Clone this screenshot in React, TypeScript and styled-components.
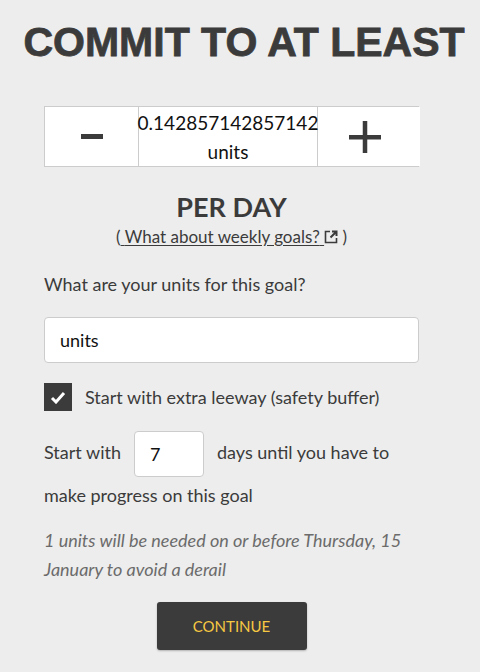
import React, { useState } from 'react';
import styled, { createGlobalStyle } from 'styled-components';

const GlobalStyle = createGlobalStyle`
  html, body {
    margin: 0;
    padding: 0;
    background: #ededed;
  }
  body {
    font-family: Lato, "Liberation Sans", sans-serif;
    color: #3b3b3b;
  }
`;

const Page = styled.div`
  width: 480px;
  min-height: 672px;
  display: flex;
  flex-direction: column;
  align-items: center;
  padding-top: 20px;
  box-sizing: border-box;
`;

const Title = styled.h1`
  margin: 0 0 0 8px;
  font-family: "Liberation Sans", Arial, sans-serif;
  font-weight: 700;
  font-size: 41px;
  line-height: 44px;
  color: #3b3b3b;
  white-space: nowrap;
  -webkit-text-stroke: 0.8px #3b3b3b;
`;

const Content = styled.div`
  width: 375px;
  align-self: flex-start;
  margin-left: 44px;
  display: flex;
  flex-direction: column;
`;

const Stepper = styled.div`
  margin-top: 42px;
  display: grid;
  grid-template-columns: 93px 180px 102px;
  height: 61px;
  border: 1px solid #cccccc;
  box-sizing: border-box;
  background: #fff;
`;

const StepButton = styled.button<{ $shift?: number }>`
  border: none;
  background: #fff;
  padding: 0 ${p => p.$shift ?? 0}px 0 0;
  display: flex;
  align-items: center;
  justify-content: center;
  cursor: pointer;
`;

const StepValue = styled.div`
  border-left: 1px solid #cccccc;
  border-right: 1px solid #cccccc;
  display: flex;
  flex-direction: column;
  align-items: center;
  justify-content: center;
  font-size: 19px;
  line-height: 29px;
  color: #111;
`;

const PerDay = styled.div`
  margin-top: 24px;
  text-align: center;
  font-size: 27px;
  font-weight: 700;
  line-height: 32px;
`;

const LinkLine = styled.div`
  margin-top: 3px;
  text-align: center;
  font-size: 17px;
  line-height: 22px;
`;

const WeeklyLink = styled.a`
  color: #3b3b3b;
  text-decoration: underline;
  text-underline-offset: 2px;
`;

const Label = styled.div`
  margin-top: 24px;
  font-size: 18px;
  line-height: 24px;
`;

const TextInput = styled.input`
  margin-top: 21px;
  height: 46px;
  box-sizing: border-box;
  border: 1px solid #cccccc;
  border-radius: 4px;
  padding: 0 15px;
  font-family: Lato, "Liberation Sans", sans-serif;
  font-size: 18px;
  color: #111;
  background: #fff;
  outline: none;
`;

const CheckRow = styled.label`
  margin-top: 20px;
  display: flex;
  align-items: center;
  gap: 13px;
  font-size: 18px;
  line-height: 28px;
`;

const Box = styled.span`
  width: 28px;
  height: 28px;
  background: #3b3b3b;
  display: flex;
  align-items: center;
  justify-content: center;
  flex-shrink: 0;
`;

const DaysText = styled.div`
  margin-top: 20px;
  font-size: 18px;
  line-height: 37px;
`;

const DaysInput = styled.input`
  width: 70px;
  height: 46px;
  box-sizing: border-box;
  margin: 0 13px;
  border: 1px solid #cccccc;
  border-radius: 4px;
  padding: 0 15px;
  font-family: Lato, "Liberation Sans", sans-serif;
  font-size: 18px;
  color: #111;
  background: #fff;
  vertical-align: middle;
  outline: none;
`;

const Note = styled.p`
  margin: 12px 0 0;
  font-style: italic;
  font-size: 18px;
  line-height: 29px;
  color: #6b6b6b;
`;

const ContinueButton = styled.button`
  margin: 18px auto 0;
  width: 150px;
  height: 48px;
  border: none;
  border-radius: 3px;
  background: #3b3b3b;
  color: #f7c842;
  font-family: Lato, "Liberation Sans", sans-serif;
  font-size: 15px;
  box-shadow: 0 1px 2px rgba(0, 0, 0, 0.25);
  cursor: pointer;
`;

const App: React.FC = () => {
  const [units, setUnits] = useState('units');
  const [days, setDays] = useState('7');

  return (
    <Page>
      <GlobalStyle />
      <Title>COMMIT TO AT LEAST</Title>
      <Content>
        <Stepper>
          <StepButton aria-label="decrease">
            <svg width="22" height="5" viewBox="0 0 22 5">
              <rect width="22" height="5" fill="#3b3b3b" />
            </svg>
          </StepButton>
          <StepValue>
            <span>0.142857142857142</span>
            <span>units</span>
          </StepValue>
          <StepButton aria-label="increase" $shift={9}>
            <svg width="32" height="32" viewBox="0 0 32 32">
              <rect x="0" y="14" width="32" height="4.5" fill="#3b3b3b" />
              <rect x="13.75" y="0" width="4.5" height="32" fill="#3b3b3b" />
            </svg>
          </StepButton>
        </Stepper>
        <PerDay>PER DAY</PerDay>
        <LinkLine>
          (<WeeklyLink href="#">
            {' '}What about weekly goals?{' '}
            <svg width="14" height="14" viewBox="0 0 14 14" style={{ verticalAlign: '-1px' }}>
              <path d="M6 1.5H1.5v11h11V8" fill="none" stroke="#3b3b3b" strokeWidth="1.6" />
              <path d="M8 1.5h4.5V6M12.5 1.5 6.5 7.5" fill="none" stroke="#3b3b3b" strokeWidth="2" />
            </svg>
          </WeeklyLink>{' '}
          )
        </LinkLine>
        <Label>What are your units for this goal?</Label>
        <TextInput value={units} onChange={e => setUnits(e.target.value)} />
        <CheckRow>
          <Box>
            <svg width="16" height="13" viewBox="0 0 16 13">
              <path d="M2 7l4 4 8-9" fill="none" stroke="#fff" strokeWidth="3" />
            </svg>
          </Box>
          Start with extra leeway (safety buffer)
        </CheckRow>
        <DaysText>
          Start with
          <DaysInput value={days} onChange={e => setDays(e.target.value)} />
          days until you have to make progress on this goal
        </DaysText>
        <Note>1 units will be needed on or before Thursday, 15 January to avoid a derail</Note>
        <ContinueButton>CONTINUE</ContinueButton>
      </Content>
    </Page>
  );
};

export default App;
